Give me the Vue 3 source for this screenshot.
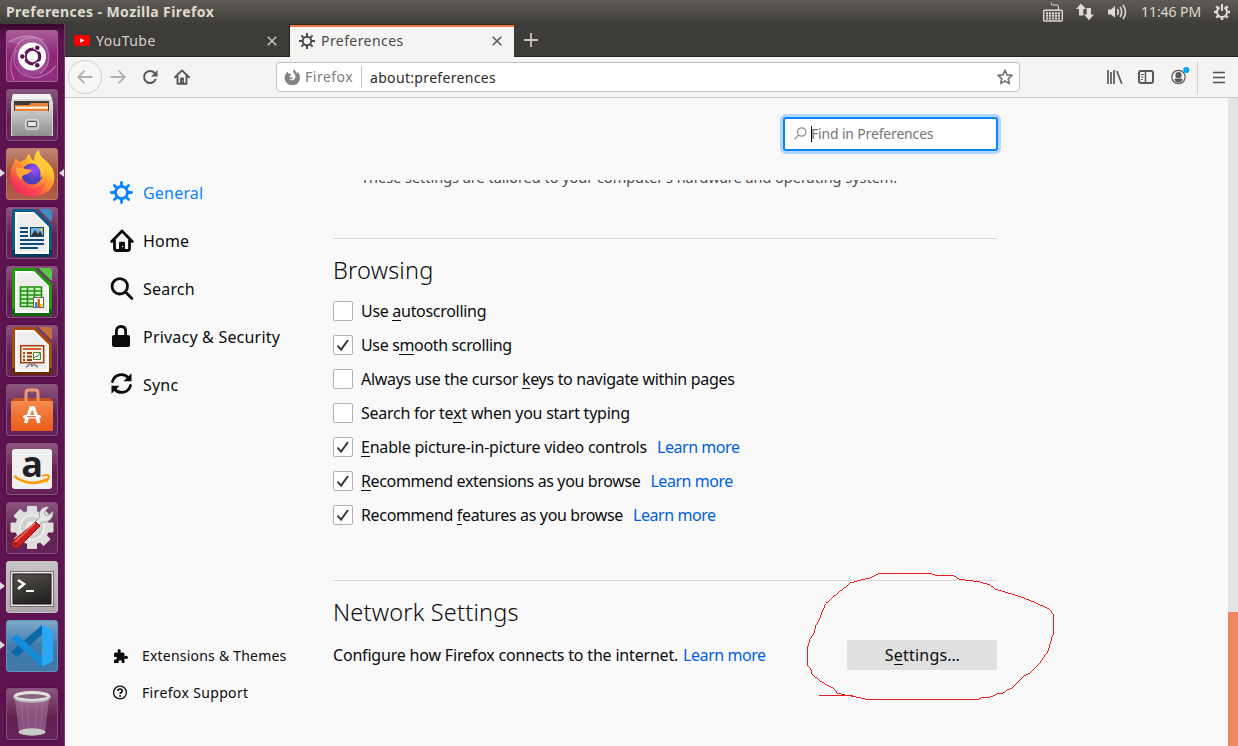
<script setup>
const categories = [
  { id: 'general', label: 'General', active: true },
  { id: 'home', label: 'Home' },
  { id: 'search', label: 'Search' },
  { id: 'privacy', label: 'Privacy & Security' },
  { id: 'sync', label: 'Sync' },
]

const options = [
  { id: 'autoscroll', pre: 'Use ', key: 'a', post: 'utoscrolling', on: false },
  { id: 'smooth', pre: 'Use s', key: 'm', post: 'ooth scrolling', on: true },
  { id: 'cursor', pre: 'Always use the cursor ', key: 'k', post: 'eys to navigate within pages', on: false },
  { id: 'typing', pre: 'Search for te', key: 'x', post: 't when you start typing', on: false },
  { id: 'pip', pre: '', key: 'E', post: 'nable picture-in-picture video controls', on: true, link: true },
  { id: 'ext', pre: '', key: 'R', post: 'ecommend extensions as you browse', on: true, link: true },
  { id: 'feat', pre: 'Recommend ', key: 'f', post: 'eatures as you browse', on: true, link: true },
]

const docs = [
  { id: 'writer', edge: '#0b5a8c', dark: '#063a5e', fold: '#3c8fc0' },
  { id: 'calc', edge: '#1f9a0c', dark: '#0d6a02', fold: '#5cc84a' },
  { id: 'impress', edge: '#a9480f', dark: '#6b2800', fold: '#c5713c' },
]
</script>

<template>
  <div class="desktop">
    <header class="panel">
      <span class="window-title">Preferences - Mozilla Firefox</span>
      <div class="indicators">
        <svg class="i-kbd" width="20" height="20" viewBox="0 0 20 20" fill="none" stroke="#dfdbd2">
          <path d="M8.500 .5v1.500q0 1 1 1h4.500q1.500 0 1.500 1.500v3.500" />
          <rect x=".7" y="8.200" width="18.600" height="10.800" rx="1" stroke-width="1.400" />
          <path d="M3 11.200h14M3 13.700h14M3 16.500h14" stroke-width="1.900" stroke-dasharray="2.200 .8" />
        </svg>
        <svg class="i-net" width="18" height="18" viewBox="0 0 18 18" fill="#dfdbd2">
          <path d="M5 .5 10 6H7.300v6.500H3V6H0zM13 17.200 8 11.500h2.700V5H15v6.500h3z" />
        </svg>
        <svg class="i-vol" width="21" height="18" viewBox="0 0 21 18" fill="none" stroke="#dfdbd2">
          <path d="M1 6.500h3L8 2.800v12L4 11.400H1z" fill="#dfdbd2" stroke="none" />
          <path d="M10.300 6q2 2.900 0 6M13 4q3.400 4.900 0 10M16 2q5 6.900 0 14" stroke-width="1.600" />
        </svg>
        <span class="clock">11:46 PM</span>
        <svg class="i-power" width="18" height="18" viewBox="-9 -9 18 18" fill="none" stroke="#dfdbd2">
          <path d="M-2.400-4.500A5.100 5.100 0 1 0 2.400-4.500" stroke-width="2" />
          <path d="M0-8V-1" stroke-width="2" />
          <path d="M5.500 0H8M-5.500 0H-8M0 5.500V8M4-4l1.700-1.700M-4-4l-1.700-1.700M4 4l1.700 1.700M-4 4l-1.700 1.700" stroke-width="2.600" />
        </svg>
      </div>
    </header>

    <aside class="launcher">
      <div class="tile tile-dash">
        <svg viewBox="0 0 52 52">
          <g fill="none" stroke="#fff" stroke-opacity=".3" stroke-width="1.200">
            <path d="M2 12Q28-2 40 16Q48 32 34 44M8 50Q0 32 12 14Q20 4 38 10M50 36Q34 54 16 44Q4 34 10 20" />
          </g>
          <path d="M2 12Q28-2 40 16Q48 32 34 44Q20 50 12 38Q6 26 12 14z" fill="#fff" opacity=".13" />
          <circle cx="26" cy="26.500" r="14" fill="#fff" />
          <circle cx="26.500" cy="26.500" r="7.300" fill="none" stroke="#5e1552" stroke-width="3.200" />
          <path d="M30.150 20.200 32 17M19.200 26.500h-3M30.150 32.800 32 36" stroke="#fff" stroke-width="7" />
          <g fill="#5e1552">
            <circle cx="16.300" cy="26.500" r="2.300" /><circle cx="31.300" cy="17.800" r="2.300" /><circle cx="31.300" cy="35.200" r="2.300" />
          </g>
        </svg>
      </div>
      <div class="tile">
        <svg viewBox="0 0 52 52">
          <defs><linearGradient id="cab" x2="0" y2="1"><stop stop-color="#c9c9c7" /><stop offset="1" stop-color="#8f8f8d" /></linearGradient></defs>
          <path d="M7 5h37l3 8v34H5V13z" fill="#d6d6d4" />
          <path d="M7 5h37l2 5H6z" fill="#f3f3f2" />
          <path d="M8 12h35v12H8z" fill="#3e3a37" />
          <path d="M9 16h14l2-2h17v10H9z" fill="#e8833b" /><path d="M9 17h33v3H9z" fill="#f3b070" /><path d="M10 18h32v1.500H10z" fill="#fff4e6" />
          <path d="M6 22h40v23q0 2-2 2H8q-2 0-2-2z" fill="url(#cab)" />
          <rect x="19.500" y="30.500" width="13" height="10" rx="2" fill="#bababa" stroke="#dcdcdc" />
          <rect x="21.500" y="32.500" width="9" height="5" rx="1" fill="#e7e7e7" stroke="#4a4a4a" />
        </svg>
      </div>
      <div class="tile tile-firefox">
        <svg viewBox="0 0 52 52">
          <defs>
            <linearGradient id="ff" x1=".9" y1="0" x2=".2" y2="1"><stop stop-color="#fff44f" /><stop offset=".35" stop-color="#ffbd2e" /><stop offset=".65" stop-color="#ff7139" /><stop offset="1" stop-color="#e60b70" /></linearGradient>
            <radialGradient id="globe" cx=".6" cy=".3"><stop stop-color="#a24bff" /><stop offset="1" stop-color="#4a3fb8" /></radialGradient>
          </defs>
          <path d="M33 2q0 6 6 10 10 8 9.500 18Q47 47 27 48.500 6 48 4 29 4 20 8 15l1-5 5 4q3-2 6-3 1-4 3-5 1 4 5 7 0-8 5-11z" fill="url(#ff)" />
          <circle cx="26" cy="26" r="10.500" fill="url(#globe)" />
          <path d="M10 20q6-1 10 1 3 0 6 1-3 4-8 5-3 1-2 5-6-3-6-12z" fill="#ffa436" />
          <path d="M22 14q7 0 10 5 4 5 2 11 7-6 4-16-4-4-6-8-2 3-1 8-4-2-9 0z" fill="#ffc83a" />
          <path d="M4.500 27q4 14 18 14 12 0 17-8-3 14-15 15.500Q6 47 4.500 27z" fill="#ff3a55" opacity=".55" />
        </svg>
      </div>
      <div v-for="d in docs" :key="d.id" class="tile">
        <svg viewBox="0 0 52 52">
          <path d="M9 2h20l17 16v29q0 3-3 3H9q-3 0-3-3V5q0-3 3-3z" :fill="d.edge" />
          <path d="M6 43h40v4q0 3-3 3H9q-3 0-3-3z" :fill="d.dark" />
          <path d="M9 5h19L43 20v27H9z" fill="#fff" />
          <path d="M11 7h16.500L41 20.500V45H11z" fill="#eeeeed" />
          <path d="M33 2h10q3 0 3 3v9q-1 1.500-2.500 0L33 4.500q-1.500-1.500 0-2.500z" :fill="d.fold" />
          <path d="M29 2h3.500L46 15.500V18z" fill="#6d3a66" />
          <g v-if="d.id === 'writer'">
            <path d="M14 21h8M14 25h8M14 29h8M14 33h24M14 37h24M14 41h18" stroke="#0b4c78" stroke-width="2" />
            <rect x="24.500" y="20.500" width="13" height="9" fill="#6cb2e0" stroke="#0b4c78" /><path d="m25 29 4-6 3 4 2-3 3 5z" fill="#333" /><circle cx="35.500" cy="22.500" r="1.500" fill="#f5c211" />
          </g>
          <g v-else-if="d.id === 'calc'">
            <path d="M14 20h22v21H14z" fill="#c9f0c0" /><path d="M14.500 21h21v19.500h-21zM14 25h22M14 29h22M14 33h22M14 37h22M21.500 21v20M28.500 21v20" fill="none" stroke="#1f8f0f" stroke-width="1.600" />
            <rect x="27.500" y="31.500" width="10" height="10" fill="#fff" stroke="#666" /><path d="M29 36h2.500v5H29z" fill="#1e90e0" /><path d="M31.500 33H34v8h-2.500z" fill="#e66100" /><path d="M34 38h2.500v3H34z" fill="#f5c211" />
          </g>
          <g v-else>
            <rect x="14.700" y="20.700" width="23" height="17" fill="#f7efe9" stroke="#a03c08" stroke-width="1.500" /><path d="M17 24h18" stroke="#d0622c" stroke-width="2" />
            <path d="M17 28h2M21 28h5M17 31.500h2M21 31.500h5M17 35h2M21 35h5" stroke="#a03c08" stroke-width="2" /><path d="M27.500 27.500h7v7h-7zM28 33l2-2 1 1 3-4" fill="#fff" stroke="#3a8a2a" />
            <path d="m26 38-6 4M26 38l6 4M26 38v4" stroke="#888" stroke-width="2" />
          </g>
        </svg>
      </div>
      <div class="tile">
        <svg viewBox="0 0 52 52">
          <defs><linearGradient id="bag" x2="0" y2="1"><stop stop-color="#f58a4f" /><stop offset="1" stop-color="#e85c1b" /></linearGradient></defs>
          <path d="M5 19 8 14h36l3 5z" fill="#c9511b" /><path d="M5 17h42v30H5z" fill="url(#bag)" />
          <path d="M20 17V9q0-3 3-3h6q3 0 3 3v8" fill="none" stroke="#ee9a6e" stroke-width="3" />
          <path d="m19.500 39 5.500-15h2.500l5.500 15" fill="none" stroke="#fff" stroke-width="3.400" /><rect x="17" y="31" width="18" height="3.500" rx="1.700" fill="#fff" /><path d="M21 32.700h9" stroke="#e95420" />
        </svg>
      </div>
      <div class="tile">
        <svg viewBox="0 0 52 52">
          <rect x="6" y="6" width="40" height="40" rx="3" fill="#f0f0f0" />
          <text x="26" y="34" text-anchor="middle" class="amazon-a">a</text>
          <path d="M8 33q16 12 34 3" fill="none" stroke="#f90" stroke-width="2.600" /><path d="M36 33q6-2 7 0 0 3-3 6" fill="none" stroke="#f90" stroke-width="2" />
        </svg>
      </div>
      <div class="tile">
        <svg viewBox="0 0 52 52">
          <g fill="#dededd"><rect v-for="n in 4" :key="n" x="21" y="4" width="10" height="43" rx="1" :transform="`rotate(${n * 45} 26 25.500)`" /><circle cx="26" cy="25.500" r="17" /></g>
          <circle cx="26" cy="25.500" r="12" fill="#cfcfce" stroke="#ededec" stroke-width="2" /><circle cx="26" cy="25.500" r="6.500" fill="#ececeb" />
          <path d="M25 24 34 15Q32 9 37 6q3-2 6-1l-5 5 1 3 3 1 5-5q1 5-3 9-4 3-8 2l-8 8z" fill="#e8e8e7" stroke="#8e8e8c" stroke-width=".8" />
          <path d="m30 20 4 4-20 20q-4 4-7 1-3-3 1-7z" fill="#cf2222" stroke="#8d1111" /><path d="M9 40 29 21" stroke="#ee7468" stroke-width="1.500" /><circle cx="9.500" cy="42" r="1.700" fill="#8e1515" />
        </svg>
      </div>
      <div class="tile tile-terminal">
        <svg viewBox="0 0 52 52">
          <defs><linearGradient id="term" x2=".4" y2="1"><stop stop-color="#55524f" /><stop offset="1" stop-color="#252422" /></linearGradient></defs>
          <rect x="4.500" y="10.500" width="43" height="35" fill="#e9e7e5" stroke="#77716f" /><rect x="7" y="13" width="38" height="30" fill="url(#term)" stroke="#151515" />
          <path d="m12 19 6 4-6 5" fill="none" stroke="#fff" stroke-width="2.600" /><path d="M20 30h8" stroke="#fff" stroke-width="2" />
        </svg>
      </div>
      <div class="tile tile-code">
        <svg viewBox="0 0 52 52">
          <path d="m5 32 31-27 3 7L11 37z" fill="#0a67aa" /><path d="m5 19 6-5 28 26-3 7z" fill="#168bd8" /><path d="m36 5 11 5v31l-11 6z" fill="#2ba8f4" />
        </svg>
      </div>
      <div class="tile tile-trash">
        <svg viewBox="0 0 52 52">
          <path d="m9 12 4 32q13 6 26 0l4-32z" fill="#c69bc0" opacity=".4" />
          <path d="m15 14 3 29M21 15l2 30M31 15l-2 30M37 14l-3 29" stroke="#fff" opacity=".1" />
          <ellipse cx="26" cy="44" rx="13.500" ry="3.700" fill="#c9c9c7" />
          <ellipse cx="26" cy="8.500" rx="17" ry="4" fill="#85697f" stroke="#e2e2e0" stroke-width="3" /><path d="M8 9q2 5 18 5t18-5" fill="none" stroke="#b0b0ae" stroke-width="2" />
        </svg>
      </div>
      <i class="pip pip-ff"></i><i class="pip pip-focus"></i><i class="pip pip-term"></i><i class="pip pip-code"></i>
    </aside>

    <section class="browser">
      <div class="tabs">
        <div class="tab">
          <svg class="yt-icon" width="16" height="11" viewBox="0 0 16 12" preserveAspectRatio="none"><rect width="16" height="12" rx="3" fill="#f00" /><path d="m6.300 3.500 4.200 2.500-4.200 2.500z" fill="#fff" /></svg>
          <span class="tab-label yt">YouTube</span>
          <svg class="close" width="10" height="10" viewBox="0 0 10 10"><path d="m.7.700 8.600 8.600M9.300.700.700 9.300" stroke="#c5c2bc" stroke-width="1.600" /></svg>
        </div>
        <div class="tab tab-active">
          <svg width="16" height="16" viewBox="-8 -8 16 16" fill="none" stroke="#4a4a4a" stroke-width="2"><circle r="4.300" /><path d="M0-8v3M0 8V5M-8 0h3M8 0H5M-5.600-5.600l2 2M5.600-5.600l-2 2M-5.600 5.600l2-2M5.600 5.600l-2-2" /></svg>
          <span class="tab-label prefs">Preferences</span>
          <svg class="close" width="10" height="10" viewBox="0 0 10 10"><path d="m.7.700 8.600 8.600M9.300.700.700 9.300" stroke="#5a5a58" stroke-width="1.600" /></svg>
        </div>
        <svg class="new-tab" width="14" height="14" viewBox="0 0 14 14"><path d="M7 0v14M0 7h14" stroke="#c9c6bf" stroke-width="1.800" /></svg>
      </div>

      <div class="toolbar">
        <div class="back"><svg width="16" height="14" viewBox="0 0 16 14"><path d="M15.500 7H1M7.500.700 1.200 7l6.300 6.300" /></svg></div>
        <svg class="forward" width="16" height="14" viewBox="0 0 16 14"><path d="M.5 7H15M8.500.700 14.800 7l-6.300 6.300" /></svg>
        <svg class="reload" width="16" height="16" viewBox="0 0 16 16"><path d="M12.600 4A6 6 0 1 0 13.800 9.800" fill="none" stroke="#585856" stroke-width="2" /><path d="M15.500 1v6.500H9z" fill="#585856" /></svg>
        <svg class="home-btn" width="16" height="16" viewBox="0 0 16 16"><path d="M1 8.300 8 1.400l7 6.900M3.500 7v7.800h9V7" fill="none" stroke="#585856" stroke-width="1.900" stroke-linejoin="round" stroke-linecap="round" /><path d="M6 15V9.500q0-1 1-1h2q1 0 1 1V15z" fill="#585856" /><circle cx="8.500" cy="12" r=".6" fill="#fff" /></svg>
        <div class="urlbar">
          <svg width="16" height="16" viewBox="0 0 16 16"><path d="M4.100 2.300A7.700 7.700 0 1 0 15.800 7q-.3-3-2.700-4.500.5 1.300.1 2.300Q12 2 9.700.200q-.700 1.600-.2 3.600 2 1.300 2 4A3.700 3.700 0 0 1 5 10q2 .9 3.500-.5Q9 8.800 8 8.300q-1.700.500-2.700-.6.200-1 1.700-1.500L7.200 5Q5.700 5 4.400 4.600 3.700 3.500 4.100 2.300z" fill="#838381" /></svg>
          <span class="identity">Firefox</span>
          <span class="url">about:preferences</span>
          <svg class="star" width="16" height="16" viewBox="0 0 16 16"><path d="m8 1.200 2 4.600 5 .5-3.700 3.400 1 4.900L8 12.100l-4.300 2.500 1-4.900L1 6.300l5-.5z" fill="none" stroke="#777775" stroke-width="1.700" stroke-linejoin="round" /></svg>
        </div>
        <svg class="library" width="16" height="14" viewBox="0 0 16 14"><path d="M1 0v14M4 2v12M7 0v14M9.800 1l5 12.700" stroke="#585856" stroke-width="1.700" /></svg>
        <svg class="sidebar-btn" width="16" height="14" viewBox="0 0 16 14" fill="none" stroke="#585856"><rect x="1" y="1" width="14" height="12" rx="2" stroke-width="2" /><path d="M7.500 1v12" stroke-width="1.600" /><path d="M3 4.500h3M3 7h2.500M3 9.500h2" /></svg>
        <svg class="account" width="20" height="20" viewBox="0 0 20 20"><circle cx="8.500" cy="11" r="6.700" fill="none" stroke="#585856" stroke-width="1.200" /><circle cx="8.500" cy="9.200" r="3.100" fill="#585856" /><path d="M4.300 13q2-1 4.200 0 2.200-1 4.200 0-1 3.500-4.200 3.500T4.300 13z" fill="#585856" /><circle cx="16.300" cy="4" r="3.100" fill="#00aaf8" /></svg>
        <i class="divider"></i>
        <svg class="menu" width="12" height="13" viewBox="0 0 12 13"><path d="M0 1.500h12M0 6.500h12M0 11.500h12" stroke="#4e4e4c" stroke-width="1.700" /></svg>
      </div>

      <div class="page">
        <nav class="nav">
          <a v-for="c in categories" :key="c.id" class="cat" :class="{ active: c.active }">
            <svg width="24" height="24" viewBox="0 0 24 24" fill="none" stroke="currentColor" stroke-width="2.800" stroke-linecap="round" stroke-linejoin="round">
              <template v-if="c.id === 'general'"><circle cx="11.500" cy="11.500" r="6" /><path d="M11.500 1.400v3M11.500 18.600v3M1.400 11.500h3M18.600 11.500h3M4.400 4.400l2 2M16.600 16.600l2 2M4.400 18.600l2-2M16.600 6.400l2-2" /></template>
              <template v-else-if="c.id === 'home'"><path d="M1.700 12.500 12 2l10.300 10.500M4.500 11v8.500q0 2 2 2h11q2 0 2-2V11" /><path d="M9 22v-8q0-1.300 1.300-1.300h3.400Q15 12.700 15 14v8z" fill="currentColor" stroke="none" /><circle cx="12.700" cy="17.500" r=".7" fill="#fff" stroke="none" /></template>
              <template v-else-if="c.id === 'search'"><circle cx="9.800" cy="9.300" r="7.700" /><path d="m15.700 15.200 6.200 6.200" /></template>
              <template v-else-if="c.id === 'privacy'"><rect x="2" y="10" width="18" height="12" rx="2" fill="currentColor" stroke="none" /><path d="M6.400 12V6.200q0-4.700 4.600-4.700t4.600 4.700V12" /></template>
              <template v-else><path d="M2.500 8.500A9.200 9.200 0 0 1 18.500 5M20.500 12.500A9.200 9.200 0 0 1 4.500 16" /><path d="M21.500.300v8h-8zM1.500 20.700v-8h8z" fill="currentColor" stroke="none" /></template>
            </svg>
            <span>{{ c.label }}</span>
          </a>
          <div class="footer-links">
            <a class="ext-link"><svg width="16" height="16" viewBox="0 0 16 16"><path d="M1 6q0-1.500 1.500-1.500H5V4Q4 1.500 6 1q2.500.5 1.500 3v.5h2.700q1.300 0 1.300 1.500v2.500q1-.8 2-.7 1.500.5 1.500 1.700T13.500 11q-1.200.2-2-.7V15H8.700q.7-2.500-1.500-2.700Q5 12.500 5.700 15H1v-3.500q2.500.8 2.800-1.200Q3.500 8.300 1 9z" fill="currentColor" /></svg><span>Extensions &amp; Themes</span></a>
            <a class="sup-link"><svg width="16" height="16" viewBox="0 0 16 16" fill="none" stroke="currentColor"><circle cx="7" cy="7.500" r="6.400" stroke-width="1.300" /><path d="M4.900 6q0-2 2.100-2t2.200 1.800q0 1-1.100 1.700-1 .6-1 1.400" stroke-width="1.700" /><circle cx="7.100" cy="11" r=".6" fill="currentColor" /></svg><span>Firefox Support</span></a>
          </div>
        </nav>

        <main class="main">
          <div class="sticky">
            <div class="find">
              <svg width="13" height="13" viewBox="0 0 13 13" fill="none" stroke="#8c8c8c" stroke-width="1.200"><circle cx="7.700" cy="5" r="4.200" /><path d="M4.700 8 .5 12.300" /></svg>
              <i class="caret"></i><span>Find in Preferences</span>
            </div>
          </div>
          <div class="pane">
            <p class="tailored">These settings are tailored to your computer’s hardware and operating system.</p>
            <section class="group browsing">
              <h2>Browsing</h2>
              <div v-for="o in options" :key="o.id" class="option">
                <span class="box"><svg v-if="o.on" width="14" height="14" viewBox="0 0 14 14"><path d="m1.500 7.700 3.600 4L12 2" fill="none" stroke="#3a3a3a" stroke-width="2" /></svg></span>
                <span class="label" :class="'l-' + o.id">{{ o.pre }}<span class="key">{{ o.key }}</span>{{ o.post }}</span>
                <a v-if="o.link" class="more">Learn more</a>
              </div>
            </section>
            <section class="group network">
              <h2>Network Settings</h2>
              <div class="net-row">
                <span class="label l-net">Configure how Firefox connects to the internet.</span>
                <a class="more">Learn more</a>
                <button class="settings">S<span class="key">e</span>ttings…</button>
              </div>
            </section>
          </div>
        </main>
        <div class="scrollbar"><i class="thumb"></i></div>
      </div>
    </section>

    <svg class="scribble" viewBox="780 560 300 160" width="300" height="160">
      <g transform="translate(780 560) scale(.33333)">
        <polyline points="118,406 215,406 225,410 258,418 597,418 605,412 632,411 653,401 668,401 680,391 697,384 712,367 733,347 750,339 780,308 805,272 815,235 821,220 821,165 807,146 790,139 745,119 705,105 645,87 630,75 595,65 540,58 517,46 462,45 452,40 298,40 270,54 245,59 208,70 195,83 175,97 155,116 137,131 128,152 118,178 107,198 103,218 90,237 83,262 83,317 94,330 94,340 120,363 160,385 172,399 200,406 240,413 258,418" />
      </g>
    </svg>
  </div>
</template>

<style>
body { margin: 0; overflow: hidden; }
</style>

<style scoped>
* { box-sizing: border-box; }
svg { display: block; flex: none; }
.desktop { position: relative; width: 1238px; height: 746px; display: grid; grid-template: 24px 722px / 65px 1173px; font-family: "Noto Sans", "Open Sans", sans-serif; font-size: 16px; color: #0c0c0d; background: #f9f9fa; overflow: hidden; white-space: nowrap; }
.panel { grid-column: 1 / 3; display: flex; justify-content: space-between; align-items: center; padding: 0 7px 0 6px; background: linear-gradient(#5c5b52, #55534b 30%, #3d3c37); color: #dfdbd2; }
.window-title { font-size: 14px; line-height: 20px; font-weight: 700; letter-spacing: .42px; }
.indicators { display: flex; align-items: center; }
.i-net { margin-left: 13px; }
.i-vol { margin-left: 13px; }
.clock { width: 60px; margin: -1px 12px 0 13px; font-size: 14px; letter-spacing: -.07px; }

.launcher { position: relative; display: flex; flex-direction: column; gap: 7px; padding: 6px 0 0 6px; background: linear-gradient(#39082f, #5d1350 14px, #5f1452); border-right: 1px solid #7b3d70; }
.tile { width: 52px; height: 52px; flex: none; border-radius: 4px; background: linear-gradient(#8b5781, #63204f 55%, #63225a); box-shadow: inset 0 0 0 1px #87507f, 0 0 3px #3d0b35; }
.tile-dash { background: linear-gradient(#a95d99, #8d2579 50%, #912e80); box-shadow: inset 0 0 0 1px #a75e9a; }
.tile-firefox { background: linear-gradient(#bf8a79, #a64e37 50%, #ae604a); box-shadow: inset 0 0 0 1px #bb7863; }
.tile-terminal { background: linear-gradient(#c9c3c5, #aca4aa); box-shadow: inset 0 0 0 1px #c6bfc3; }
.tile-code { background: linear-gradient(#80aacb, #427ba9 50%, #3f78a6); box-shadow: inset 0 0 0 1px #5f95bb; }
.tile-trash { margin-top: 9px; }
.tile svg { overflow: visible; }
.amazon-a { font: 700 36px "Open Sans", sans-serif; fill: #222; }
.pip { position: absolute; left: 0; width: 0; height: 0; border: 4px solid transparent; border-left: 5px solid #e2d8df; border-right: 0; }
.pip-ff { top: 145px; }
.pip-term { top: 558px; }
.pip-code { top: 617px; }
.pip-focus { left: auto; right: 0; top: 145px; border-left: 0; border-right: 5px solid #e2d8df; }

.browser { display: flex; flex-direction: column; }
.tabs { height: 33px; display: flex; align-items: center; background: #3c3b37; border-bottom: 1px solid #252422; }
.tab { width: 225px; height: 32px; display: flex; align-items: center; padding: 0 12px 0 9px; color: #d6d2ca; font-size: 14px; border-right: 1px solid #242320; }
.tab-active { width: 224px; height: 33px; align-self: flex-start; border-top: 1px solid #2c2b28; background: #f5f4f3; color: #4a4a4a; box-shadow: inset 0 2px 0 #f07746; border-right: 0; }
.tab-label { margin-left: 6px; }
.prefs { margin-top: -1px; letter-spacing: .42px; }
.yt { letter-spacing: .45px; }
.yt-icon { margin-top: 1px; }
.tab .close { margin: 1px 0 0 auto; }
.tab-active .close { margin-top: 0; }
.new-tab { margin-left: 10px; }
.toolbar { height: 41px; display: flex; align-items: center; background: #f5f4f3; border-bottom: 1px solid #c9c8c7; }
.back { width: 34px; height: 34px; margin-left: 3px; border: 1px solid #d0cfce; border-radius: 50%; display: grid; place-items: center; background: #f8f7f6; }
.back path, .forward path { fill: none; stroke: #b2b1b0; stroke-width: 1.800; }
.forward { margin-left: 8px; }
.reload { margin-left: 16px; }
.home-btn { margin-left: 16px; }
.urlbar { width: 744px; height: 30px; margin-left: 86px; display: flex; align-items: center; padding: 0 6px 0 8px; background: #fff; border: 1px solid #c3c2c1; border-radius: 4px; font-size: 14px; }
.identity { width: 58px; height: 22px; line-height: 22px; margin-left: 3px; padding-left: 1px; color: #7d7d7c; border-right: 1px solid #c5c5c5; letter-spacing: .5px; }
.urlbar > svg:first-child { margin-left: -1px; margin-right: 1px; }
.url { margin-left: 8px; color: #2b2b2b; letter-spacing: .33px; }
.star { margin-left: auto; }
.library { margin-left: 87px; }
.sidebar-btn { margin-left: 15px; }
.account { margin: -3px 0 0 16px; }
.divider { width: 1px; height: 33px; margin-left: 7px; background: #d0cfce; }
.menu { margin-left: 15px; }

.page { position: relative; height: 648px; display: flex; background: #f9f9fa; }
.nav { width: 268px; padding: 71px 0 0 45px; display: flex; flex-direction: column; }
.cat { height: 48px; display: flex; align-items: center; gap: 9px; font-size: 16px; letter-spacing: .2px; }
.active { color: #0a84ff; }
.footer-links { margin-top: 228px; font-size: 14px; letter-spacing: .21px; }
.footer-links a { height: 37px; display: flex; align-items: center; gap: 14px; padding-left: 3px; }
.footer-links svg { margin-right: -1px; }
.sup-link { letter-spacing: .35px; }
.main { width: 664px; display: flex; flex-direction: column; }
.sticky { height: 82px; display: flex; justify-content: flex-end; align-items: flex-start; padding-top: 19px; }
.find { width: 215px; height: 34px; display: flex; align-items: center; padding-left: 9px; margin-right: -1px; border: 2px solid #0a84ff; border-radius: 3px; box-shadow: 0 0 0 3px #afd6fd; background: #fff; color: #767676; font-size: 14px; }
.find svg { margin-top: -2px; }
.caret { width: 1px; height: 16px; margin-left: 4px; background: #000; }
.find span { margin: -2px 0 0 -1px; letter-spacing: -.17px; }
.pane { height: 566px; overflow: hidden; }
.tailored { height: 20px; line-height: 20px; margin: -13px 0 0 28px; font-size: 14.500px; letter-spacing: -.02px; color: #4a4a4f; }
.group { border-top: 1px solid #d7d7db; }
.browsing { margin-top: 51px; height: 342px; }
h2 { height: 30px; line-height: 30px; margin: 16px 0 9px; font-size: 23.500px; font-weight: 300; letter-spacing: .2px; }
.option { height: 34px; display: flex; align-items: center; }
.box { width: 20px; height: 20px; display: grid; place-items: center; border: 1px solid #b1b1b1; border-radius: 2px; background: #fff; margin-right: 8px; }
.label, .more { font-size: 16px; line-height: 22px; }
.l-autoscroll { letter-spacing: -.3px; }
.l-smooth { letter-spacing: -.35px; }
.l-cursor { letter-spacing: -.31px; }
.l-typing { letter-spacing: -.25px; }
.l-pip { letter-spacing: -.21px; }
.l-ext { letter-spacing: -.36px; }
.l-feat { letter-spacing: -.34px; }
.l-net { letter-spacing: -.19px; }
.key { box-shadow: 0 1px 0 #0c0c0d; display: inline-block; line-height: 17px; }
.more { margin-left: 10px; color: #0060df; letter-spacing: -.45px; }
.net-row { height: 30px; display: flex; align-items: center; margin-top: 13px; }
.net-row .more { margin-left: 5px; }
.settings { width: 150px; height: 30px; margin-left: auto; padding: 0 0 0 1px; border: 0; border-radius: 2px; background: #e0e0e1; font: inherit; letter-spacing: .2px; color: #0c0c0d; }
.scrollbar { display: flow-root; width: 10px; height: 648px; margin-left: auto; background: #e3e3e3; }
.thumb { display: block; height: 134px; margin-top: 514px; background: #f08763; }
.scribble { position: absolute; left: 780px; top: 560px; pointer-events: none; }
.scribble polyline { fill: none; stroke: #ed1c24; stroke-width: 3; shape-rendering: crispEdges; }
</style>
